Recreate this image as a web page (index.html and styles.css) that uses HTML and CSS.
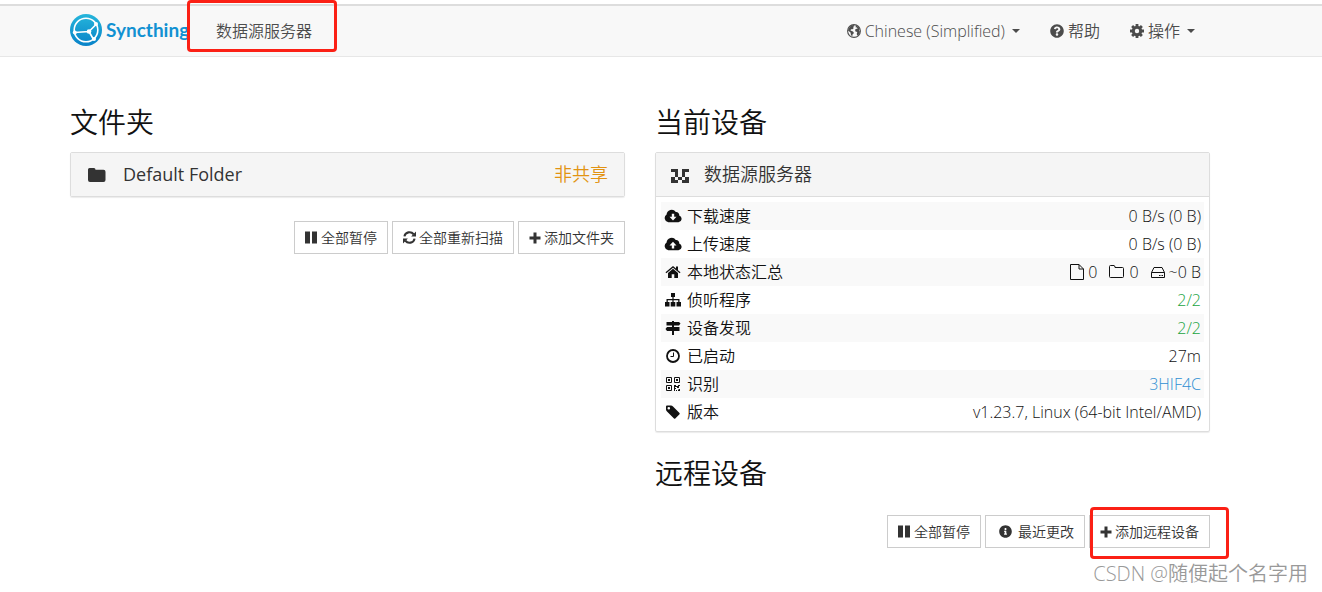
FILE: index.html
```html
<!DOCTYPE html>
<html lang="zh-CN">
<head>
<meta charset="utf-8">
<title>数据源服务器 | Syncthing</title>
<link rel="stylesheet" href="styles.css">
</head>
<body>
<header class="navbar">
  <div class="container navbar-row">
    <a class="brand" href="#">
      <svg class="logo" viewBox="0 0 32 32" aria-hidden="true">
        <defs><linearGradient id="lg" x1="0" y1="0" x2="0" y2="1"><stop offset="0" stop-color="#26b6db"/><stop offset="1" stop-color="#0882c8"/></linearGradient></defs>
        <circle cx="16" cy="16" r="16" fill="url(#lg)"/>
        <g fill="none" stroke="#fff" stroke-width="1.6"><circle cx="16" cy="16" r="11.8"/><path d="M19 17.500L26.500 10M19 17.500L4.500 18.500M19 17.500L23.500 25.500"/></g>
        <g fill="#fff"><circle cx="26" cy="10" r="2"/><circle cx="4.800" cy="18.500" r="2"/><circle cx="24" cy="25" r="2"/><circle cx="19" cy="17.500" r="2.300"/></g>
      </svg>
      <span>Syncthing</span>
    </a>
    <p class="device-name marked">数据源服务器</p>
    <nav class="menu">
      <button class="menu-item" type="button">
        <svg class="icon" viewBox="0 0 14 14"><circle cx="7" cy="7" r="6.400" fill="none" stroke="currentColor" stroke-width="1.100"/><path d="M1.500 4.500L4 1.500 7 1 7.500 2 6 3 6.800 4 5.500 5.300 4 5.300 3.500 6.500 6 7.500 7 9 5.500 10.500 5.300 12.500 4 11 3.500 8.500 1 6.500zM9 1.500L11.500 2.800 13 5.500 12 5.800 13 8 11.500 11 10 11.500 9.800 9.500 10.300 8 8.500 7.500 8 5.800 9.300 4.800 10.500 5 10 3.500 8.500 3.300z"/></svg>
        <span>Chinese (Simplified)</span><i class="caret"></i>
      </button>
      <a class="menu-item" href="#">
        <svg class="icon" viewBox="0 0 512 512"><path d="M504 256c0 136.997-111.043 248-248 248S8 392.997 8 256C8 119.083 119.043 8 256 8s248 111.083 248 248zM262.655 90c-54.497 0-89.255 22.957-116.549 63.758-3.536 5.286-2.353 12.415 2.715 16.258l34.699 26.310c5.205 3.947 12.621 3.008 16.665-2.122 17.864-22.658 30.113-35.797 57.303-35.797 20.429 0 45.698 13.148 45.698 32.958 0 14.976-12.363 22.667-32.534 33.976C247.128 238.528 216 254.941 216 296v4c0 6.627 5.373 12 12 12h56c6.627 0 12-5.373 12-12v-1.333c0-28.462 83.186-29.647 83.186-106.667 0-58.002-60.165-102-116.531-102zM256 338c-25.365 0-46 20.635-46 46 0 25.364 20.635 46 46 46s46-20.636 46-46c0-25.365-20.635-46-46-46z"/></svg>
        <span>帮助</span>
      </a>
      <button class="menu-item" type="button">
        <svg class="icon" viewBox="0 0 14 14"><g fill="none" stroke="currentColor"><circle cx="7" cy="7" r="3.700" stroke-width="3"/><path stroke-width="2.800" d="M7 0v3M7 11v3M0 7h3M11 7h3M2.100 2.100l2 2M9.900 9.900l2 2M11.900 2.100l-2 2M4.100 9.900l-2 2"/></g></svg>
        <span>操作</span><i class="caret"></i>
      </button>
    </nav>
  </div>
</header>

<main class="container columns">
  <section>
    <h3>文件夹</h3>
    <div class="panel">
      <button class="panel-heading" type="button">
        <svg class="icon heading-icon" viewBox="0 0 18 14"><path d="M0 1.500Q0 0 1.500 0H6Q7.500 0 7.500 1.800H15.500Q17.500 1.800 17.500 3.800V12Q17.500 14 15.500 14H2Q0 14 0 12z"/></svg>
        <span class="heading-title folder-title">Default Folder</span>
        <span class="unshared">非共享</span>
      </button>
    </div>
    <div class="actions">
      <button class="btn" type="button"><svg class="icon medium" viewBox="0 0 13 13"><path d="M0 .5h5v12H0zM7 .5h5v12H7z"/></svg>全部暂停</button>
      <button class="btn" type="button"><svg class="icon medium" viewBox="0 0 12 12"><path fill="none" stroke="currentColor" stroke-width="1.900" d="M1.300 5A4.800 4.800 0 0 1 9.800 3M10.700 7A4.800 4.800 0 0 1 2.200 9"/><path d="M12 .5V5H7.500zM0 11.500V7h4.500z"/></svg>全部重新扫描</button>
      <button class="btn" type="button"><svg class="icon small" viewBox="0 0 12 12"><path d="M4.500 .5h3v4h4v3h-4v4h-3v-4h-4v-3h4z"/></svg>添加文件夹</button>
    </div>
  </section>

  <section>
    <h3>当前设备</h3>
    <div class="panel">
      <button class="panel-heading" type="button">
        <svg class="icon heading-icon identicon" viewBox="0 0 5 5" preserveAspectRatio="none" shape-rendering="crispEdges"><path d="M0 0h2v3H1V1H0zM3 0h2v1H4v2H3zM2 3h1v1H2zM0 3h1v1h1v1H0zM4 3h1v2H3V4h1z"/></svg>
        <span class="heading-title">数据源服务器</span>
      </button>
      <div class="panel-body">
        <table class="stats">
          <tbody>
            <tr><th scope="row"><span class="label"><svg class="icon row-icon" viewBox="0 0 18 14"><path fill-rule="evenodd" d="M4.300 13.300A4.300 4.300 0 0 1 2.600 5.500 5 5 0 0 1 11.800 3 3 3 0 0 1 15.200 6.500 3.500 3.500 0 0 1 14.500 13.300zM7.800 4.800V7.800H5.500L9 11.500 12.500 7.800H10.200V4.800z"/></svg>下载速度</span></th><td>0 B/s (0 B)</td></tr>
            <tr><th scope="row"><span class="label"><svg class="icon row-icon" viewBox="0 0 18 14"><path fill-rule="evenodd" d="M4.300 13.300A4.300 4.300 0 0 1 2.600 5.500 5 5 0 0 1 11.800 3 3 3 0 0 1 15.200 6.500 3.500 3.500 0 0 1 14.500 13.300zM7.800 11.500V8.500H5.500L9 4.800 12.500 8.500H10.200V11.500z"/></svg>上传速度</span></th><td>0 B/s (0 B)</td></tr>
            <tr><th scope="row"><span class="label"><svg class="icon row-icon" viewBox="0 0 18 14"><path d="M9 3.800L14 8v5h-3.700V9.300H7.700V13H4V8zM9 1L12 3.500V1.500h2v3.700L16.500 7.300 15.700 8.200 9 2.700 2.300 8.200 1.500 7.300z"/></svg>本地状态汇总</span></th>
              <td><span class="totals">
                <span class="total"><svg class="icon outline" viewBox="0 0 14 16"><path d="M.5 .5H9L13.500 5V15.500H.5zM9 .5V5h4.500"/></svg>0</span>
                <span class="total"><svg class="icon outline" viewBox="0 0 16 16"><path d="M1.500 1.500H5Q6 1.500 6 3.500H13.500Q14.500 3.500 14.500 4.500V12.500Q14.500 13.500 13.500 13.500H1.500Q.5 13.500 .5 12.500V2.500Q.5 1.500 1.500 1.500z"/></svg>0</span>
                <span class="total"><svg class="icon outline" viewBox="0 0 14 16"><path d="M.5 8.500L3 3.500H11L13.500 8.500V13.500H.5zM.5 8.500h13M8 11.500h1.500M10.500 11.500H12"/></svg>~0 B</span>
              </span></td></tr>
            <tr><th scope="row"><span class="label"><svg class="icon row-icon" viewBox="0 0 18 14"><path d="M7 0h4v4H9.600v2H15.500v3H17v4.500h-4.500V9h1.700V7.200H9.600V9h1.700v4.500H6.700V9h1.700V7.200H3.800V9h1.700v4.500H1V9h1.500V6h5.900V4H7z"/></svg>侦听程序</span></th><td class="ok">2/2</td></tr>
            <tr><th scope="row"><span class="label"><svg class="icon row-icon" viewBox="0 0 18 14"><path d="M8 0h2v1h5l1.500 1.500L15 4.500H10V6h5.500v4H10v4H8v-4H3L1.500 8 3 6h5V4.500H2.500V1H8z"/></svg>设备发现</span></th><td class="ok">2/2</td></tr>
            <tr><th scope="row"><span class="label"><svg class="icon row-icon" viewBox="0 0 18 14"><g fill="none" stroke="currentColor"><circle cx="9" cy="7" r="6" stroke-width="1.800"/><path d="M9.500 3.500v4H6.500"/></g></svg>已启动</span></th><td>27m</td></tr>
            <tr><th scope="row"><span class="label"><svg class="icon row-icon" viewBox="0 0 18 14"><path fill="none" stroke="currentColor" d="M2.500.5h5v5h-5zM10.500.5h5v5h-5zM2.500 8.500h5v5h-5z"/><path d="M4 2h2v2H4zM12 2h2v2h-2zM4 10h2v2H4zM10 8h2v1h2V8h2v1h-1v2h-2v-1h-2v1h1v1h-1v2h-1zM12 13h1v1h-1zM14 12h2v2h-2v-1h1z"/></svg>识别</span></th><td><a href="#">3HIF4C</a></td></tr>
            <tr><th scope="row"><span class="label"><svg class="icon row-icon" viewBox="0 0 18 14"><path fill-rule="evenodd" d="M2 1.500Q2 .5 3 .5H7Q8 .5 9 1.500L15.500 8Q16 8.700 15.500 9.300L11.300 13.500Q10.700 14 10 13.500L3 6.500Q2 5.500 2 4.500zM4.800 2A1.300 1.300 0 1 0 4.800 4.600 1.300 1.300 0 1 0 4.800 2z"/></svg>版本</span></th><td>v1.23.7, Linux (64-bit Intel/AMD)</td></tr>
          </tbody>
        </table>
      </div>
    </div>
    <h3>远程设备</h3>
    <div class="actions">
      <button class="btn" type="button"><svg class="icon medium" viewBox="0 0 13 13"><path d="M0 .5h5v12H0zM7 .5h5v12H7z"/></svg>全部暂停</button>
      <button class="btn" type="button"><svg class="icon medium info" viewBox="0 0 512 512"><path d="M256 8C119.043 8 8 119.083 8 256c0 136.997 111.043 248 248 248s248-111.003 248-248C504 119.083 392.957 8 256 8zm0 110c23.196 0 42 18.804 42 42s-18.804 42-42 42-42-18.804-42-42 18.804-42 42-42zm56 254c0 6.627-5.373 12-12 12h-88c-6.627 0-12-5.373-12-12v-24c0-6.627 5.373-12 12-12h12v-64h-12c-6.627 0-12-5.373-12-12v-24c0-6.627 5.373-12 12-12h64c6.627 0 12 5.373 12 12v100h12c6.627 0 12 5.373 12 12v24z"/></svg>最近更改</button>
      <button class="btn marked" type="button"><svg class="icon small" viewBox="0 0 12 12"><path d="M4.500 .5h3v4h4v3h-4v4h-3v-4h-4v-3h4z"/></svg>添加远程设备</button>
    </div>
  </section>
</main>
<footer class="credit">CSDN @随便起个名字用</footer>
</body>
</html>
```
FILE: styles.css
```css
* { box-sizing: border-box; }

body {
  margin: 0;
  padding-top: 4px;
  background: #fff;
  color: #111;
  font: 350 16px/28px "Open Sans", "Noto Sans CJK SC", sans-serif;
}

button { font: inherit; color: inherit; cursor: pointer; }
a { color: #2f8fd3; text-decoration: none; }
.icon { display: block; flex: none; width: 14px; height: 14px; fill: currentColor; }

.container {
  max-width: 1280px;
  padding: 0 70px;
}

/* Navigation bar */
.navbar {
  background: #f8f8f8;
  border-top: 2px solid #ddd;
  border-bottom: 1px solid #e7e7e7;
}
.navbar-row { display: flex; align-items: center; height: 50px; color: #4c4c4c; }
.brand {
  display: flex;
  align-items: center;
  gap: 4px;
  width: 118px;
  margin-right: 28px;
  padding-bottom: 2px;
  color: #1291d2;
  font-family: Lato, sans-serif;
  font-size: 19px;
  font-weight: 700;
}
.logo { display: block; flex: none; width: 32px; height: 32px; }
.device-name { margin: 0; }
.menu { display: flex; gap: 30px; margin-left: auto; padding-right: 15px; }
.menu-item {
  display: flex;
  align-items: center;
  gap: 4px;
  padding: 0;
  border: 0;
  background: none;
  color: #4c4c4c;
}
.caret {
  margin-left: 3px;
  border: 4px solid transparent;
  border-top-color: currentColor;
  border-bottom: 0;
}

/* Red callout frames */
.marked { position: relative; }
.marked::after {
  content: "";
  position: absolute;
  border: 3px solid #fb2015;
  border-radius: 4px;
  pointer-events: none;
}
.device-name.marked::after { inset: -17px -25px -7px -29px; }
.btn.marked::after { inset: -9px -20px -12px 0; }

/* Columns */
.columns {
  display: grid;
  grid-template-columns: 1fr 1fr;
  gap: 30px;
  padding-top: 48px;
}
h3 { margin: 0 0 12px; font-size: 28px; font-weight: 350; line-height: 35px; }

.panel {
  margin-bottom: 24px;
  border: 1px solid #ddd;
  border-radius: 2px;
  box-shadow: 0 1px 1px rgba(0, 0, 0, .08);
}
.panel-heading {
  display: flex;
  align-items: center;
  width: 100%;
  padding: 8px 16px 8px 15px;
  border: 0;
  background: #f5f5f5;
  color: #333;
  font-size: 18px;
  line-height: 27px;
  text-align: left;
}
.heading-icon { width: 18px; margin: 0 17px 0 2px; }
.identicon { margin: 2px 15px 0 0; }
.heading-title { flex: 1; }
.folder-title { font-weight: 400; }
.unshared { color: #e29311; }
.panel-body { padding: 5px; border-top: 1px solid #ddd; }

.stats { width: 100%; border-collapse: collapse; }
.stats tr:nth-child(odd) { background: #f9f9f9; }
.stats th, .stats td { padding: 0 3px; font-weight: 350; }
.stats th { text-align: left; }
.stats td { text-align: right; }
.label { display: flex; align-items: center; gap: 5px; }
.row-icon { width: 18px; }
.stats .ok { color: #1aa43f; }
.totals { display: flex; justify-content: flex-end; gap: 12px; }
.total { display: flex; align-items: center; gap: 4px; }
.outline { width: auto; height: 16px; fill: none; stroke: currentColor; stroke-width: 1; }

/* Buttons */
.actions { display: flex; justify-content: flex-end; gap: 4px; }
.panel + h3 { margin-bottom: 24px; }
.btn {
  display: flex;
  align-items: center;
  gap: 3px;
  padding: 5px 10px;
  border: 1px solid #ccc;
  background: #fff;
  color: #333;
  font-size: 14px;
  line-height: 21px;
}
.small { width: 12px; height: 12px; }
.medium { width: 13px; height: 13px; }
.info { margin: 0 3px; }

.credit {
  padding: 12px 14px 0 0;
  color: #999;
  font-size: 20px;
  text-align: right;
}
```
